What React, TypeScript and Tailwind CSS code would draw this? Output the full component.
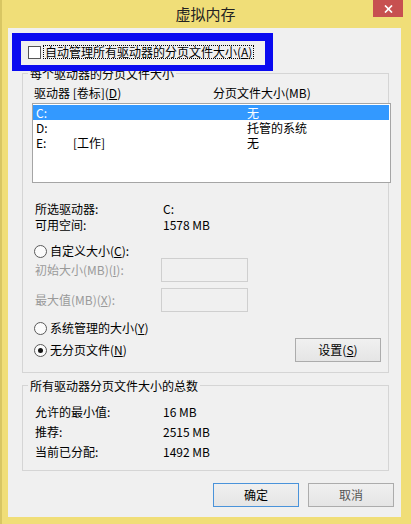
import React from "react";

function U({ c }: { c: string }) {
  return <span className="underline decoration-1 underline-offset-[1px]">{c}</span>;
}

function Radio({ checked }: { checked?: boolean }) {
  return (
    <span className="w-[13px] h-[13px] rounded-full border border-[#5A5A5A] bg-[#FBFBFB] flex items-center justify-center shrink-0">
      {checked && <span className="w-[5px] h-[5px] rounded-full bg-[#151515]" />}
    </span>
  );
}

function Btn({ children, primary }: { children: React.ReactNode; primary?: boolean }) {
  return (
    <div
      className={
        "w-[86px] h-[24px] flex items-center justify-center border bg-gradient-to-b from-[#F0F0F0] to-[#E5E5E5] " +
        (primary ? "border-[#4A93DA]" : "border-[#ACACAC]")
      }
    >
      {children}
    </div>
  );
}

export default function App() {
  const rows = [
    { d: "C:", l: "", s: "无", sel: true },
    { d: "D:", l: "", s: "托管的系统", sel: false },
    { d: "E:", l: "[工作]", s: "无", sel: false },
  ];
  return (
    <div className="w-[411px] h-[524px] bg-[#F0DE78] shadow-[inset_2px_0_0_#D8C663] relative overflow-hidden font-['Noto_Sans_CJK_SC','Microsoft_YaHei',sans-serif] text-[12px] leading-[14px] text-black">
      {/* title bar */}
      <div className="h-[28px] flex justify-center pt-[4px] relative">
        <span className="text-[15px] leading-[20px] text-[#222]">虚拟内存</span>
        <div className="absolute top-0 right-[8px] w-[30px] h-[17px] bg-[#C75050] flex items-center justify-center">
          <svg width="9" height="8" viewBox="0 0 9 8">
            <path d="M1 0.5 L8 7.5 M8 0.5 L1 7.5" stroke="#fff" strokeWidth="1.7" />
          </svg>
        </div>
      </div>

      {/* content */}
      <div className="ml-[8px] w-[393px] h-[489px] bg-[#F0F0F0] relative">
        <div className="pt-[17px] pl-[20px] flex items-center">
          <span className="w-[13px] h-[13px] border border-[#555] bg-white shrink-0" />
          <span className="ml-[2px] border border-dotted border-black px-[1px] leading-[12px] whitespace-nowrap">
            自动管理所有驱动器的分页文件大小(<U c="A" />)
          </span>
        </div>

        {/* group 1 */}
        <div className="mt-[14px] ml-[14px] w-[367px] h-[300px] border border-[#D5D5D5] flex flex-col">
          <div className="-mt-[7px] ml-[5px] px-[2px] bg-[#F0F0F0] w-fit whitespace-nowrap">每个驱动器的分页文件大小</div>
          <div className="mt-[5px] pl-[11px] flex whitespace-nowrap">
            <span className="w-[179px]">驱动器 [卷标](<U c="D" />)</span>
            <span>分页文件大小(MB)</span>
          </div>
          <div className="mt-[3px] ml-[9px] w-[359px] h-[80px] shrink-0 border border-[#A5A5A5] bg-white pt-[1px]">
            {rows.map((r) => (
              <div
                key={r.d}
                className={
                  "h-[15px] mr-[1px] flex items-center pl-[3px] leading-[13px] whitespace-nowrap " +
                  (r.sel ? "bg-[#3399FF] text-white" : "")
                }
              >
                <span className="w-[37px] shrink-0">{r.d}</span>
                <span className="w-[174px] shrink-0">{r.l}</span>
                <span>{r.s}</span>
              </div>
            ))}
          </div>
          <div className="mt-[18px] pl-[12px] leading-[16px]">
            <div className="flex">
              <span className="w-[128px]">所选驱动器:</span>
              <span>C:</span>
            </div>
            <div className="flex">
              <span className="w-[128px]">可用空间:</span>
              <span>1578 MB</span>
            </div>
          </div>
          <div className="mt-[11px] pl-[11px] h-[14px] flex items-center gap-[3px]">
            <Radio />
            <span>自定义大小(<U c="C" />):</span>
          </div>
          <div className="pl-[12px] h-[24px] flex items-center text-[#9A9A9A]">
            <span className="w-[126px]">初始大小(MB)(<U c="I" />):</span>
            <span className="w-[87px] h-[24px] border border-[#CFCFCF] bg-[#F0F0F0]" />
          </div>
          <div className="mt-[6px] pl-[12px] h-[24px] flex items-center text-[#9A9A9A]">
            <span className="w-[126px]">最大值(MB)(<U c="X" />):</span>
            <span className="w-[87px] h-[24px] border border-[#CFCFCF] bg-[#F0F0F0]" />
          </div>
          <div className="mt-[9px] pl-[11px] h-[14px] flex items-center gap-[3px]">
            <Radio />
            <span>系统管理的大小(<U c="Y" />)</span>
          </div>
          <div className="mt-[3px] pl-[11px] pr-[7px] h-[24px] flex items-center justify-between">
            <div className="flex items-center gap-[3px]">
              <Radio checked />
              <span>无分页文件(<U c="N" />)</span>
            </div>
            <Btn>
              设置(<U c="S" />)
            </Btn>
          </div>
        </div>

        {/* group 2 */}
        <div className="mt-[12px] ml-[14px] w-[367px] h-[86px] border border-[#D5D5D5] flex flex-col">
          <div className="-mt-[7px] ml-[5px] px-[2px] bg-[#F0F0F0] w-fit whitespace-nowrap">所有驱动器分页文件大小的总数</div>
          <div className="mt-[9px] pl-[12px] leading-[20px]">
            <div className="flex">
              <span className="w-[128px]">允许的最小值:</span>
              <span>16 MB</span>
            </div>
            <div className="flex">
              <span className="w-[128px]">推荐:</span>
              <span>2515 MB</span>
            </div>
            <div className="flex">
              <span className="w-[128px]">当前已分配:</span>
              <span>1492 MB</span>
            </div>
          </div>
        </div>

        {/* buttons */}
        <div className="mt-[12px] pr-[7px] flex justify-end gap-[9px]">
          <Btn primary>确定</Btn>
          <Btn>
            <span className="text-[#555]">取消</span>
          </Btn>
        </div>

        {/* blue annotation frame */}
        <div className="absolute left-[4px] top-[5px] w-[261px] h-[38px] border-[#0A0AF0] border-t-[8px] border-r-[8px] border-b-[6px] border-l-[9px] pointer-events-none" />
      </div>
    </div>
  );
}
